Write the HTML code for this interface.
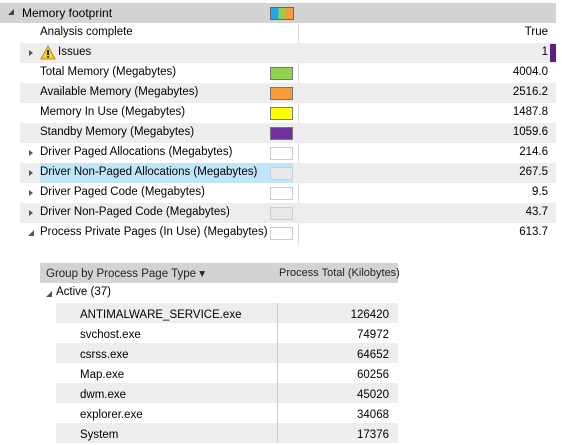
<!DOCTYPE html><html><head><style>
body{margin:0;width:562px;height:445px;background:#fff;font-family:"Liberation Sans",sans-serif;font-size:11.5px;color:#000;position:relative;overflow:hidden}
.a{position:absolute}
.r{position:absolute;left:20px;width:536px;height:20px}
.s{background:#ededed}
.t{position:absolute;left:20px;top:3px;white-space:nowrap}
.v{position:absolute;right:8px;top:3px}
.sw{position:absolute;left:250px;top:4px;width:21px;height:11px;border:1px solid #777}
.e{position:absolute;left:7px;top:7px;width:0;height:0;border-left:4px solid #555;border-top:3.5px solid transparent;border-bottom:3.5px solid transparent}
.l{position:absolute;left:56px;width:342px;height:20px}
</style></head><body>
<div class="a" style="left:0;top:3px;width:556px;height:20px;background:#d3d3d3"></div>
<div class="a" style="left:8px;top:9px;width:0;height:0;border-right:6px solid #444;border-top:6px solid transparent"></div>
<div class="a" style="left:22px;top:6px;font-size:12px">Memory footprint</div>
<div class="a" style="left:270px;top:7px;width:22px;height:11px;border:1px solid #666;background:linear-gradient(90deg,#1ea7e9 0 33%,#92d050 33% 66%,#f79a3a 66%)"></div>
<div class="a" style="left:298px;top:23px;width:1px;height:222px;background:#ddd"></div>
<div class="r" style="top:23px"><div class="t">Analysis complete</div><div class="v">True</div></div>
<div class="r s" style="top:43px"><div class="e" style="left:9px"></div>
<svg class="a" style="left:20px;top:2px" width="16" height="15"><path d="M8 1L15 14H1Z" fill="#f6cf2a" stroke="#b8901a"/><rect x="7.2" y="5" width="1.6" height="5" fill="#000"/><rect x="7.2" y="11" width="1.6" height="1.6" fill="#000"/></svg>
<div class="t" style="left:38px">Issues</div><div class="v">1</div><div class="a" style="right:0;top:1px;width:6px;height:18px;background:#5c1f86"></div></div>
<div class="r" style="top:63px"><div class="t">Total Memory (Megabytes)</div><div class="sw" style="background:#92d050"></div><div class="v">4004.0</div></div>
<div class="r s" style="top:83px"><div class="t">Available Memory (Megabytes)</div><div class="sw" style="background:#f79a3a"></div><div class="v">2516.2</div></div>
<div class="r" style="top:103px"><div class="t">Memory In Use (Megabytes)</div><div class="sw" style="background:#ffff00"></div><div class="v">1487.8</div></div>
<div class="r s" style="top:123px"><div class="t">Standby Memory (Megabytes)</div><div class="sw" style="background:#7030a0"></div><div class="v">1059.6</div></div>
<div class="r" style="top:143px"><div class="e" style="left:9px"></div><div class="t">Driver Paged Allocations (Megabytes)</div><div class="sw" style="background:#fff;border-color:#ccc"></div><div class="v">214.6</div></div>
<div class="r s" style="top:163px"><div class="e" style="left:9px"></div><div class="a" style="left:20px;top:0;width:253px;height:20px;background:#bfe6f8"></div><div class="t">Driver Non-Paged Allocations (Megabytes)</div><div class="sw" style="background:#e8e8e8;border-color:#ccc"></div><div class="v">267.5</div></div>
<div class="r" style="top:183px"><div class="e" style="left:9px"></div><div class="t">Driver Paged Code (Megabytes)</div><div class="sw" style="background:#fff;border-color:#ccc"></div><div class="v">9.5</div></div>
<div class="r s" style="top:203px"><div class="e" style="left:9px"></div><div class="t">Driver Non-Paged Code (Megabytes)</div><div class="sw" style="background:#e8e8e8;border-color:#ccc"></div><div class="v">43.7</div></div>
<div class="r" style="top:223px"><div class="a" style="left:8px;top:7px;width:0;height:0;border-right:6px solid #555;border-top:6px solid transparent"></div><div class="t">Process Private Pages (In Use) (Megabytes)</div><div class="sw" style="background:#fff;border-color:#ccc"></div><div class="v">613.7</div></div>

<div class="a" style="left:40px;top:263px;width:358px;height:20px;background:#d3d3d3"></div>
<div class="a" style="left:46px;top:266px;color:#222">Group by Process Page Type ▾</div>
<div class="a" style="left:279px;top:267px;color:#222;font-size:11px">Process Total (Kilobytes)</div>
<div class="a" style="left:46px;top:291px;width:0;height:0;border-right:6px solid #555;border-top:6px solid transparent"></div>
<div class="a" style="left:56px;top:286px">Active (37)</div>
<div class="l s" style="top:303px"></div>
<div class="l s" style="top:343px"></div>
<div class="l s" style="top:383px"></div>
<div class="l s" style="top:423px"></div>
<div class="a" style="left:277px;top:303px;width:1px;height:140px;background:#ccc"></div>
<div class="a" style="left:80px;top:305px;line-height:20px">ANTIMALWARE_SERVICE.exe<br>svchost.exe<br>csrss.exe<br>Map.exe<br>dwm.exe<br>explorer.exe<br>System</div>
<div class="a" style="right:173px;top:305px;line-height:20px;text-align:right">126420<br>74972<br>64652<br>60256<br>45020<br>34068<br>17376</div>
</body></html>
